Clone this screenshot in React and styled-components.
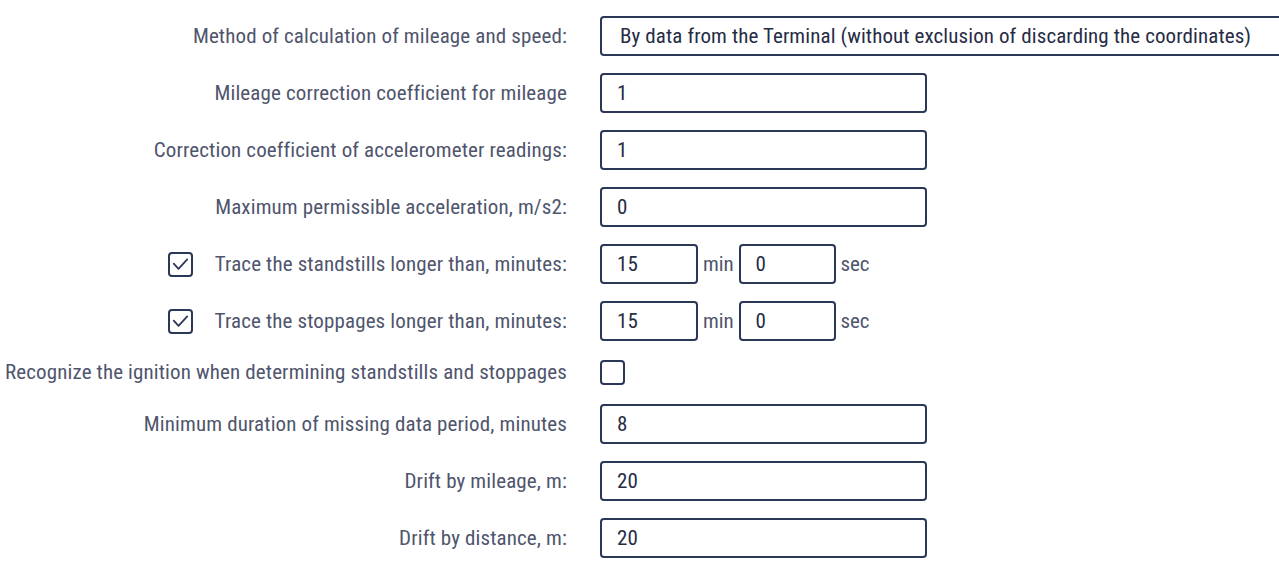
import * as React from 'react';
import styled, { createGlobalStyle } from 'styled-components';

// =====================================
// STYLED COMPONENTS
// =====================================

const GlobalStyle = createGlobalStyle`
  html, body {
    margin: 0;
    padding: 0;
    background: #ffffff;
    overflow: hidden;
  }
  body {
    font-family: "Roboto Condensed", Roboto, "Liberation Sans", sans-serif;
  }
`;

const Page = styled.div`
  width: 1279px;
  height: 567px;
  overflow: hidden;
`;

const Form = styled.div`
  display: flex;
  flex-direction: column;
  gap: 17px;
  padding-top: 16px;
`;

const Row = styled.div`
  display: grid;
  grid-template-columns: 567px auto;
  column-gap: 33px;
  align-items: center;
  min-height: ${(p) => (p.short ? '28px' : '40px')};
  margin-bottom: ${(p) => (p.short ? '1px' : '0')};
`;

const LabelCell = styled.div`
  display: flex;
  align-items: center;
  justify-content: flex-end;
  gap: 22px;
`;

const Label = styled.span`
  color: #4f556d;
  font-size: 21px;
  letter-spacing: 0.13px;
  white-space: nowrap;
`;

const Box = styled.div`
  box-sizing: border-box;
  width: ${(p) => p.width || '327px'};
  height: 40px;
  border: 2px solid #2b3757;
  border-radius: 4px;
  padding: 0 ${(p) => p.pad || '15px'};
  display: flex;
  align-items: center;
  color: #262c45;
  font-size: 21px;
  letter-spacing: 0.1px;
  white-space: nowrap;
  background: #fff;
`;

const Group = styled.div`
  display: flex;
  align-items: center;
`;

const Unit = styled.span`
  color: #4f556d;
  font-size: 21px;
  letter-spacing: -0.1px;
  padding: 0 5px 0 5px;
`;

const Check = styled.div`
  box-sizing: border-box;
  width: 25px;
  height: 25px;
  border: 2px solid #2b3757;
  border-radius: 4px;
  display: flex;
  align-items: center;
  justify-content: center;
  background: #fff;
`;

// ==========================================

const Checkbox = ({ checked }) => (
  <Check>
    {checked && (
      <svg width="19" height="19" viewBox="0 0 24 24" fill="none" stroke="#2b3757" strokeWidth="2.2" strokeLinecap="round" strokeLinejoin="round">
        <path d="M3.5 11l6 6.5L20.5 5.5" />
      </svg>
    )}
  </Check>
);

const TimeInput = ({ minutes, seconds }) => (
  <Group>
    <Box width="98px">{minutes}</Box>
    <Unit>min</Unit>
    <Box width="97px">{seconds}</Box>
    <Unit>sec</Unit>
  </Group>
);

const App = () => {
  return (
    <Page>
      <GlobalStyle />
      <Form>
        <Row>
          <LabelCell><Label>Method of calculation of mileage and speed:</Label></LabelCell>
          <Box width="720px" pad="18px">By data from the Terminal (without exclusion of discarding the coordinates)</Box>
        </Row>
        <Row>
          <LabelCell><Label>Mileage correction coefficient for mileage</Label></LabelCell>
          <Box>1</Box>
        </Row>
        <Row>
          <LabelCell><Label>Correction coefficient of accelerometer readings:</Label></LabelCell>
          <Box>1</Box>
        </Row>
        <Row>
          <LabelCell><Label>Maximum permissible acceleration, m/s2:</Label></LabelCell>
          <Box>0</Box>
        </Row>
        <Row>
          <LabelCell>
            <Checkbox checked />
            <Label>Trace the standstills longer than, minutes:</Label>
          </LabelCell>
          <TimeInput minutes="15" seconds="0" />
        </Row>
        <Row>
          <LabelCell>
            <Checkbox checked />
            <Label>Trace the stoppages longer than, minutes:</Label>
          </LabelCell>
          <TimeInput minutes="15" seconds="0" />
        </Row>
        <Row short>
          <LabelCell><Label>Recognize the ignition when determining standstills and stoppages</Label></LabelCell>
          <Checkbox />
        </Row>
        <Row>
          <LabelCell><Label>Minimum duration of missing data period, minutes</Label></LabelCell>
          <Box>8</Box>
        </Row>
        <Row>
          <LabelCell><Label>Drift by mileage, m:</Label></LabelCell>
          <Box>20</Box>
        </Row>
        <Row>
          <LabelCell><Label>Drift by distance, m:</Label></LabelCell>
          <Box>20</Box>
        </Row>
      </Form>
    </Page>
  );
};

export default App;
